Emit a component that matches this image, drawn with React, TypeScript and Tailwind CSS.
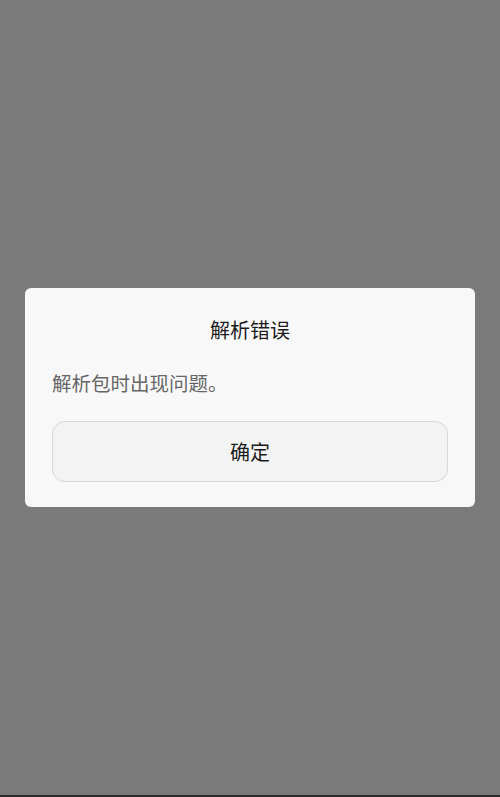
const App = () => {
  return (
    <div
      className="flex flex-col w-[500px] h-[797px] bg-[#7a7a7a]"
      style={{ fontFamily: '"Noto Sans CJK SC", "Noto Sans", sans-serif' }}
    >
      <div className="flex-1 flex flex-col justify-center">
        <div className="mx-[25px] bg-[#f8f8f8] rounded-[6px] px-[27px] pt-[28px] pb-[25px]">
          <h1 className="text-center text-[20px] leading-[28px] text-[#1c1c1c]">解析错误</h1>
          <p className="mt-[25px] text-[19.5px] leading-[28px] text-[#666666]">解析包时出现问题。</p>
          <button className="mt-[24px] w-full h-[61px] rounded-[13px] border border-[#d6d6d6] bg-[#f3f3f3] text-[20px] text-[#1c1c1c]">
            确定
          </button>
        </div>
      </div>
      <div className="h-[2px] bg-[#2a2a2a]" />
    </div>
  );
};

export default App;
